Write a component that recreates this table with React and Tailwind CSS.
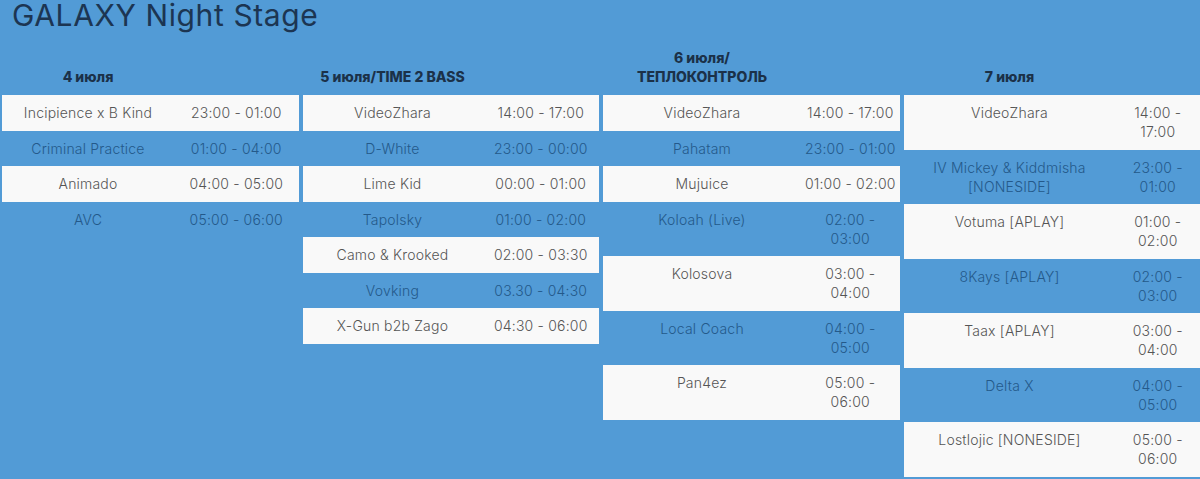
import React from 'react';

const columns = [
    {
        header: ['4 июля'],
        nameW: 'w-[172px]',
        rows: [
            { name: ['Incipience x B Kind'], time: ['23:00 - 01:00'] },
            { name: ['Criminal Practice'], time: ['01:00 - 04:00'] },
            { name: ['Animado'], time: ['04:00 - 05:00'] },
            { name: ['AVC'], time: ['05:00 - 06:00'] },
        ],
    },
    {
        header: ['5 июля/TIME 2 BASS'],
        nameW: 'w-[180px]',
        rows: [
            { name: ['VideoZhara'], time: ['14:00 - 17:00'] },
            { name: ['D-White'], time: ['23:00 - 00:00'] },
            { name: ['Lime Kid'], time: ['00:00 - 01:00'] },
            { name: ['Tapolsky'], time: ['01:00 - 02:00'] },
            { name: ['Camo & Krooked'], time: ['02:00 - 03:30'] },
            { name: ['Vovking'], time: ['03.30 - 04:30'] },
            { name: ['X-Gun b2b Zago'], time: ['04:30 - 06:00'] },
        ],
    },
    {
        header: ['6 июля/', 'ТЕПЛОКОНТРОЛЬ'],
        nameW: 'w-[198px]',
        rows: [
            { name: ['VideoZhara'], time: ['14:00 - 17:00'] },
            { name: ['Pahatam'], time: ['23:00 - 01:00'] },
            { name: ['Mujuice'], time: ['01:00 - 02:00'] },
            { name: ['Koloah (Live)'], time: ['02:00 -', '03:00'] },
            { name: ['Kolosova'], time: ['03:00 -', '04:00'] },
            { name: ['Local Coach'], time: ['04:00 -', '05:00'] },
            { name: ['Pan4ez'], time: ['05:00 -', '06:00'] },
        ],
    },
    {
        header: ['7 июля'],
        nameW: 'w-[212px]',
        rows: [
            { name: ['VideoZhara'], time: ['14:00 -', '17:00'] },
            { name: ['IV Mickey & Kiddmisha', '[NONESIDE]'], time: ['23:00 -', '01:00'] },
            { name: ['Votuma [APLAY]'], time: ['01:00 -', '02:00'] },
            { name: ['8Kays [APLAY]'], time: ['02:00 -', '03:00'] },
            { name: ['Taax [APLAY]'], time: ['03:00 -', '04:00'] },
            { name: ['Delta X'], time: ['04:00 -', '05:00'] },
            { name: ['Lostlojic [NONESIDE]'], time: ['05:00 -', '06:00'] },
        ],
    },
];

const Lines = ({ lines }) => lines.map((l, i) => <div key={i}>{l}</div>);

const App = () => {
    return (
        <div
            className="h-[479px] overflow-hidden bg-[#529bd6] pl-[2px]"
            style={{ fontFamily: 'Inter, "Open Sans", sans-serif' }}
        >
            <h1 className="pl-[10px] text-[30px] leading-[30px] tracking-[0.6px] font-normal text-[#1c3552]">
                GALAXY Night Stage
            </h1>
            <div className="grid grid-cols-4 gap-x-[4px] mt-[8px]">
                {columns.map((col, ci) => (
                    <div key={ci}>
                        <div className="h-[57px] flex items-end pb-[9px]">
                            <div
                                className={`${col.nameW} text-center text-[14px] leading-[19px] font-extrabold text-[#1b3149]`}
                            >
                                <Lines lines={col.header} />
                            </div>
                        </div>
                        {col.rows.map((row, ri) => (
                            <div
                                key={ri}
                                className={`flex pt-[8px] pb-[8.5px] text-[14px] leading-[19px] tracking-[0.2px] font-light ${
                                    ri % 2 === 0 ? 'bg-[#f9f9f9] text-[#555555]' : 'text-[#24598a]'
                                }`}
                            >
                                <div className={`${col.nameW} text-center px-[6px]`}>
                                    <Lines lines={row.name} />
                                </div>
                                <div className="flex-1 text-center">
                                    <Lines lines={row.time} />
                                </div>
                            </div>
                        ))}
                    </div>
                ))}
            </div>
        </div>
    );
};

export default App;
